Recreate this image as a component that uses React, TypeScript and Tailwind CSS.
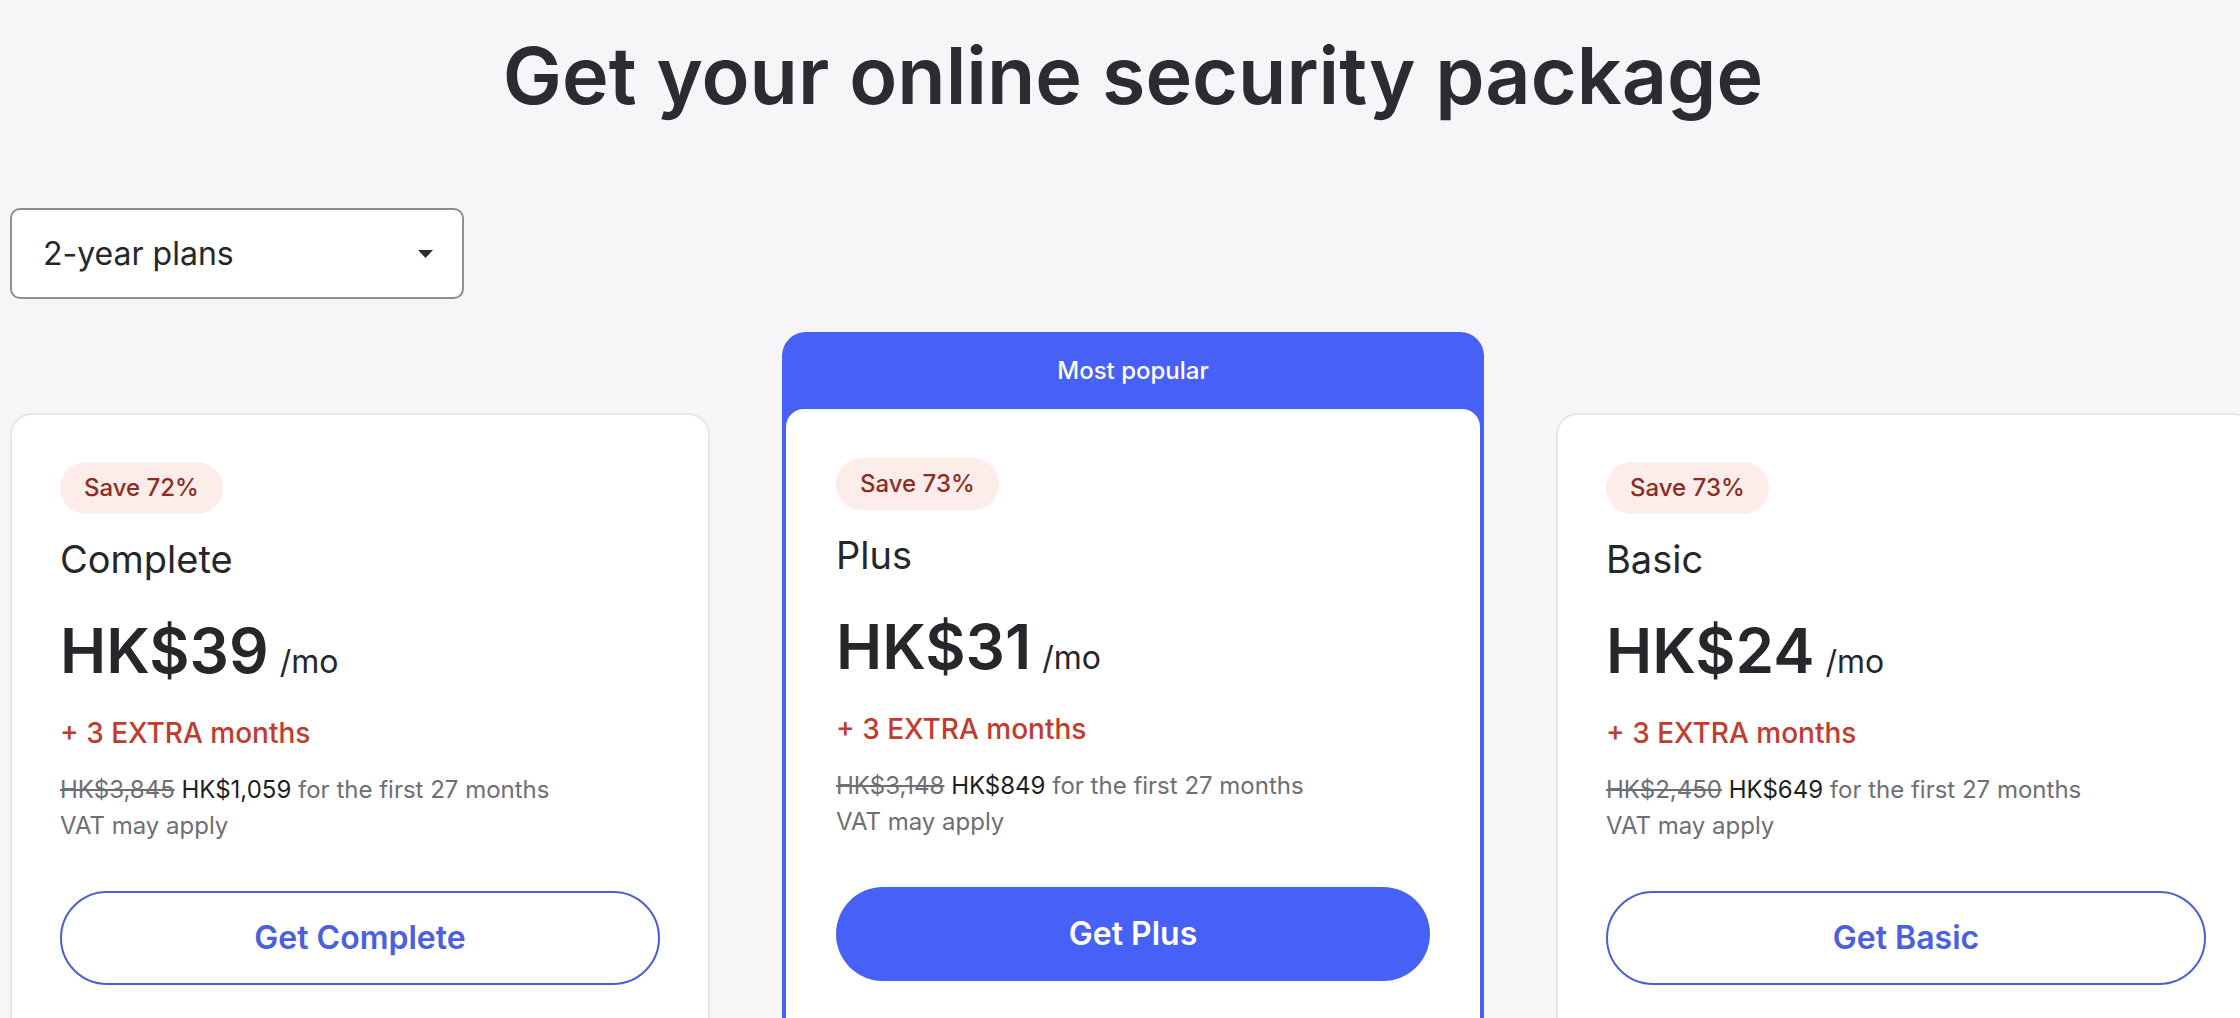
const plans = [
  {
    name: 'Complete',
    save: 'Save 72%',
    price: 'HK$39',
    was: 'HK$3,845',
    now: 'HK$1,059',
    popular: false,
  },
  {
    name: 'Plus',
    save: 'Save 73%',
    price: 'HK$31',
    was: 'HK$3,148',
    now: 'HK$849',
    popular: true,
  },
  {
    name: 'Basic',
    save: 'Save 73%',
    price: 'HK$24',
    was: 'HK$2,450',
    now: 'HK$649',
    popular: false,
  },
]

type Plan = (typeof plans)[number]

function PlanBody({ plan }: { plan: Plan }) {
  return (
    <>
      <span className="inline-flex h-[52px] items-center self-start rounded-full bg-[#fcecea] px-[24px] text-[24px] font-medium text-[#8f2b20]">
        {plan.save}
      </span>

      <h2 className="mt-[22px] text-[38px] leading-[46px] font-normal text-[#26272b]">{plan.name}</h2>

      <div className="mt-[38px] flex items-baseline gap-[11px] text-[#26272b]">
        <span className="text-[62px] leading-none font-semibold">{plan.price}</span>
        <span className="text-[32px] leading-none">/mo</span>
      </div>

      <p className="mt-[34px] text-[28px] leading-[34px] font-medium text-[#c23b2c]">+ 3 EXTRA months</p>

      <div className="mt-[22px] text-[24px] leading-[36px] text-[#6e6e74]">
        <p>
          <span className="line-through">{plan.was}</span> <span className="text-[#1f1f23]">{plan.now}</span> for the
          first 27 months
        </p>
        <p>VAT may apply</p>
      </div>

      {plan.popular ? (
        <button className="mt-[47px] h-[94px] w-full rounded-full bg-[#4760f5] text-[32px] font-semibold text-white">
          Get {plan.name}
        </button>
      ) : (
        <button className="mt-[47px] h-[94px] w-full rounded-full border-2 border-[#4a5ed8] bg-white text-[32px] font-semibold text-[#4a60e0]">
          Get {plan.name}
        </button>
      )}
    </>
  )
}

export default function App() {
  return (
    <main
      className="min-h-screen w-full overflow-hidden bg-[#f6f6f8]"
      style={{ fontFamily: 'Inter, "Noto Sans", sans-serif' }}
    >
      <div className="ml-[10px] w-[2246px]">
        {/* ── Heading ── */}
        <h1 className="pt-[36px] text-center text-[79px] leading-none font-semibold text-[#2b2c31]">
          Get your online security package
        </h1>

        {/* ── Term picker ── */}
        <div className="mt-[93px] flex h-[91px] w-[454px] items-center justify-between rounded-[10px] border-2 border-[#8e8e93] bg-white pr-[29px] pl-[31px]">
          <span className="text-[32px] text-[#26272b]">2-year plans</span>
          <svg width="15" height="8" viewBox="0 0 15 8">
            <path d="M0 0h15L7.5 8z" fill="#2b2c31" />
          </svg>
        </div>

        {/* ── Plans ── */}
        <div className="mt-[33px] flex items-start gap-[72px]">
          {plans.map((plan) =>
            plan.popular ? (
              <div key={plan.name} className="w-[702px] shrink-0 rounded-[24px] bg-[#4760f5] px-[4px]">
                <div className="flex h-[77px] items-center justify-center text-[24px] font-medium text-white">
                  Most popular
                </div>
                <div className="flex flex-col rounded-[18px] bg-white px-[50px] pt-[49px] pb-[120px]">
                  <PlanBody plan={plan} />
                </div>
              </div>
            ) : (
              <div
                key={plan.name}
                className="mt-[81px] flex w-[700px] shrink-0 flex-col rounded-[22px] border-2 border-[#e6e6e9] bg-white px-[48px] pt-[47px] pb-[120px]"
              >
                <PlanBody plan={plan} />
              </div>
            ),
          )}
        </div>
      </div>
    </main>
  )
}
